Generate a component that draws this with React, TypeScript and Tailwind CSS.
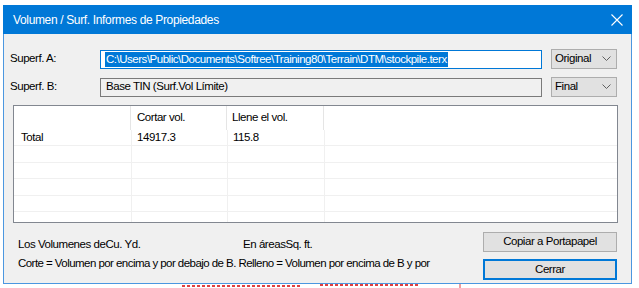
import React from "react";

const font = { fontFamily: '"Liberation Sans", Arial, sans-serif' };

function Chevron() {
  return (
    <svg width="9" height="6" viewBox="0 0 9 6" className="shrink-0">
      <polyline points="0.5,0.5 4.5,4.5 8.5,0.5" fill="none" stroke="#606060" strokeWidth="1" />
    </svg>
  );
}

function Select({ label }: { label: string }) {
  return (
    <div className="w-[66px] h-[20px] border border-[#adadad] bg-[#e1e1e1] flex items-center justify-between pl-[3px] pr-[5px] text-black">
      <span>{label}</span>
      <Chevron />
    </div>
  );
}

export default function App() {
  const rows = [0, 1, 2, 3, 4];
  return (
    <div className="w-[639px] h-[288px] bg-white overflow-hidden relative text-[11.5px] tracking-[-0.45px] leading-none whitespace-nowrap" style={font}>
      <div className="ml-[3px] mt-[5px] w-[629px] h-[279px] border-x border-b border-[#4b97e0] flex flex-col bg-[#f0f0f0]">
        {/* title bar */}
        <div className="h-[29px] -mx-px bg-[#0078d7] flex items-center justify-between pl-[10px] pr-[8px] shrink-0">
          <span className="text-white text-[12px] tracking-[-0.35px]">Volumen / Surf. Informes de Propiedades</span>
          <svg width="12" height="12" viewBox="0 0 12 12" className="mr-[1px]">
            <path d="M0.5 0.5 L11.5 11.5 M11.5 0.5 L0.5 11.5" stroke="white" strokeWidth="1.1" />
          </svg>
        </div>
        {/* body */}
        <div className="flex flex-col pt-[15px]">
          <div className="flex items-center h-[20px]">
            <span className="w-[96px] pl-[6px] text-black">Superf. A:</span>
            <div className="w-[442px] h-[19px] border border-[#0078d7] bg-white flex items-center pl-[4px]">
              <span className="bg-[#0078d7] text-white px-px leading-[15px] tracking-[-0.48px]">C:\Users\Public\Documents\Softree\Training80\Terrain\DTM\stockpile.terx</span>
            </div>
            <div className="ml-[9px]"><Select label="Original" /></div>
          </div>
          <div className="flex items-center h-[20px] mt-[8px]">
            <span className="w-[96px] pl-[6px] text-black">Superf. B:</span>
            <div className="w-[442px] h-[19px] border border-[#7a7a7a] bg-[#f0f0f0] flex items-center pl-[5px] text-black">
              Base TIN (Surf.Vol Límite)
            </div>
            <div className="ml-[9px]"><Select label="Final" /></div>
          </div>
          {/* table */}
          <div className="ml-[9px] mt-[8px] w-[605px] h-[118px] border border-[#828790] bg-white flex flex-col overflow-hidden">
            <div className="h-[24px] flex shrink-0">
              <div className="w-[117px] border-r border-[#e5e5e5]" />
              <div className="w-[96px] border-r border-[#e5e5e5] flex items-center pl-[6px] text-black">Cortar vol.</div>
              <div className="w-[97px] border-r border-[#e5e5e5] flex items-center pl-[5px] text-black">Llene el vol.</div>
            </div>
            <div className="h-[16px] flex shrink-0 border-b border-[#f0f0f0] text-black">
              <div className="w-[118px] border-r border-[#f0f0f0] flex items-center pl-[7px]">Total</div>
              <div className="w-[96px] border-r border-[#f0f0f0] flex items-center pl-[5px]">14917.3</div>
              <div className="w-[97px] border-r border-[#f0f0f0] flex items-center pl-[5px]">115.8</div>
            </div>
            {rows.map((r) => (
              <div key={r} className="h-[16.5px] flex shrink-0 border-b border-[#f0f0f0]">
                <div className="w-[118px] border-r border-[#f0f0f0]" />
                <div className="w-[96px] border-r border-[#f0f0f0]" />
                <div className="w-[97px] border-r border-[#f0f0f0]" />
              </div>
            ))}
          </div>
          {/* bottom */}
          <div className="flex mt-[9px]">
            <div className="flex flex-col pl-[14px] w-[479px] text-black">
              <div className="flex h-[20px] items-center mt-[3px]">
                <span className="w-[225px]">Los Volumenes deCu. Yd.</span>
                <span>En áreasSq. ft.</span>
              </div>
              <div className="h-[20px] flex items-center mt-[-1px] tracking-[-0.55px]">
                Corte = Volumen por encima y por debajo de B. Relleno = Volumen por encima de B y por
              </div>
            </div>
            <div className="flex flex-col">
              <div className="w-[134px] h-[20px] border border-[#adadad] bg-[#e1e1e1] flex items-center justify-center text-black">
                Copiar a Portapapel
              </div>
              <div className="w-[134px] h-[21px] mt-[7px] border-2 border-[#0078d7] bg-[#e1e1e1] flex items-center justify-center text-black">
                Cerrar
              </div>
            </div>
          </div>
        </div>
      </div>
      <svg width="639" height="5" className="absolute left-0 top-[284px]">
        <path d="M182 2 L300 2" stroke="#e04040" strokeWidth="2" strokeDasharray="3 2" />
        <path d="M320 1 L420 1" stroke="#e04040" strokeWidth="2" strokeDasharray="3 2" />
        <path d="M460 0 L460 4" stroke="#e04040" strokeWidth="1" />
      </svg>
    </div>
  );
}
